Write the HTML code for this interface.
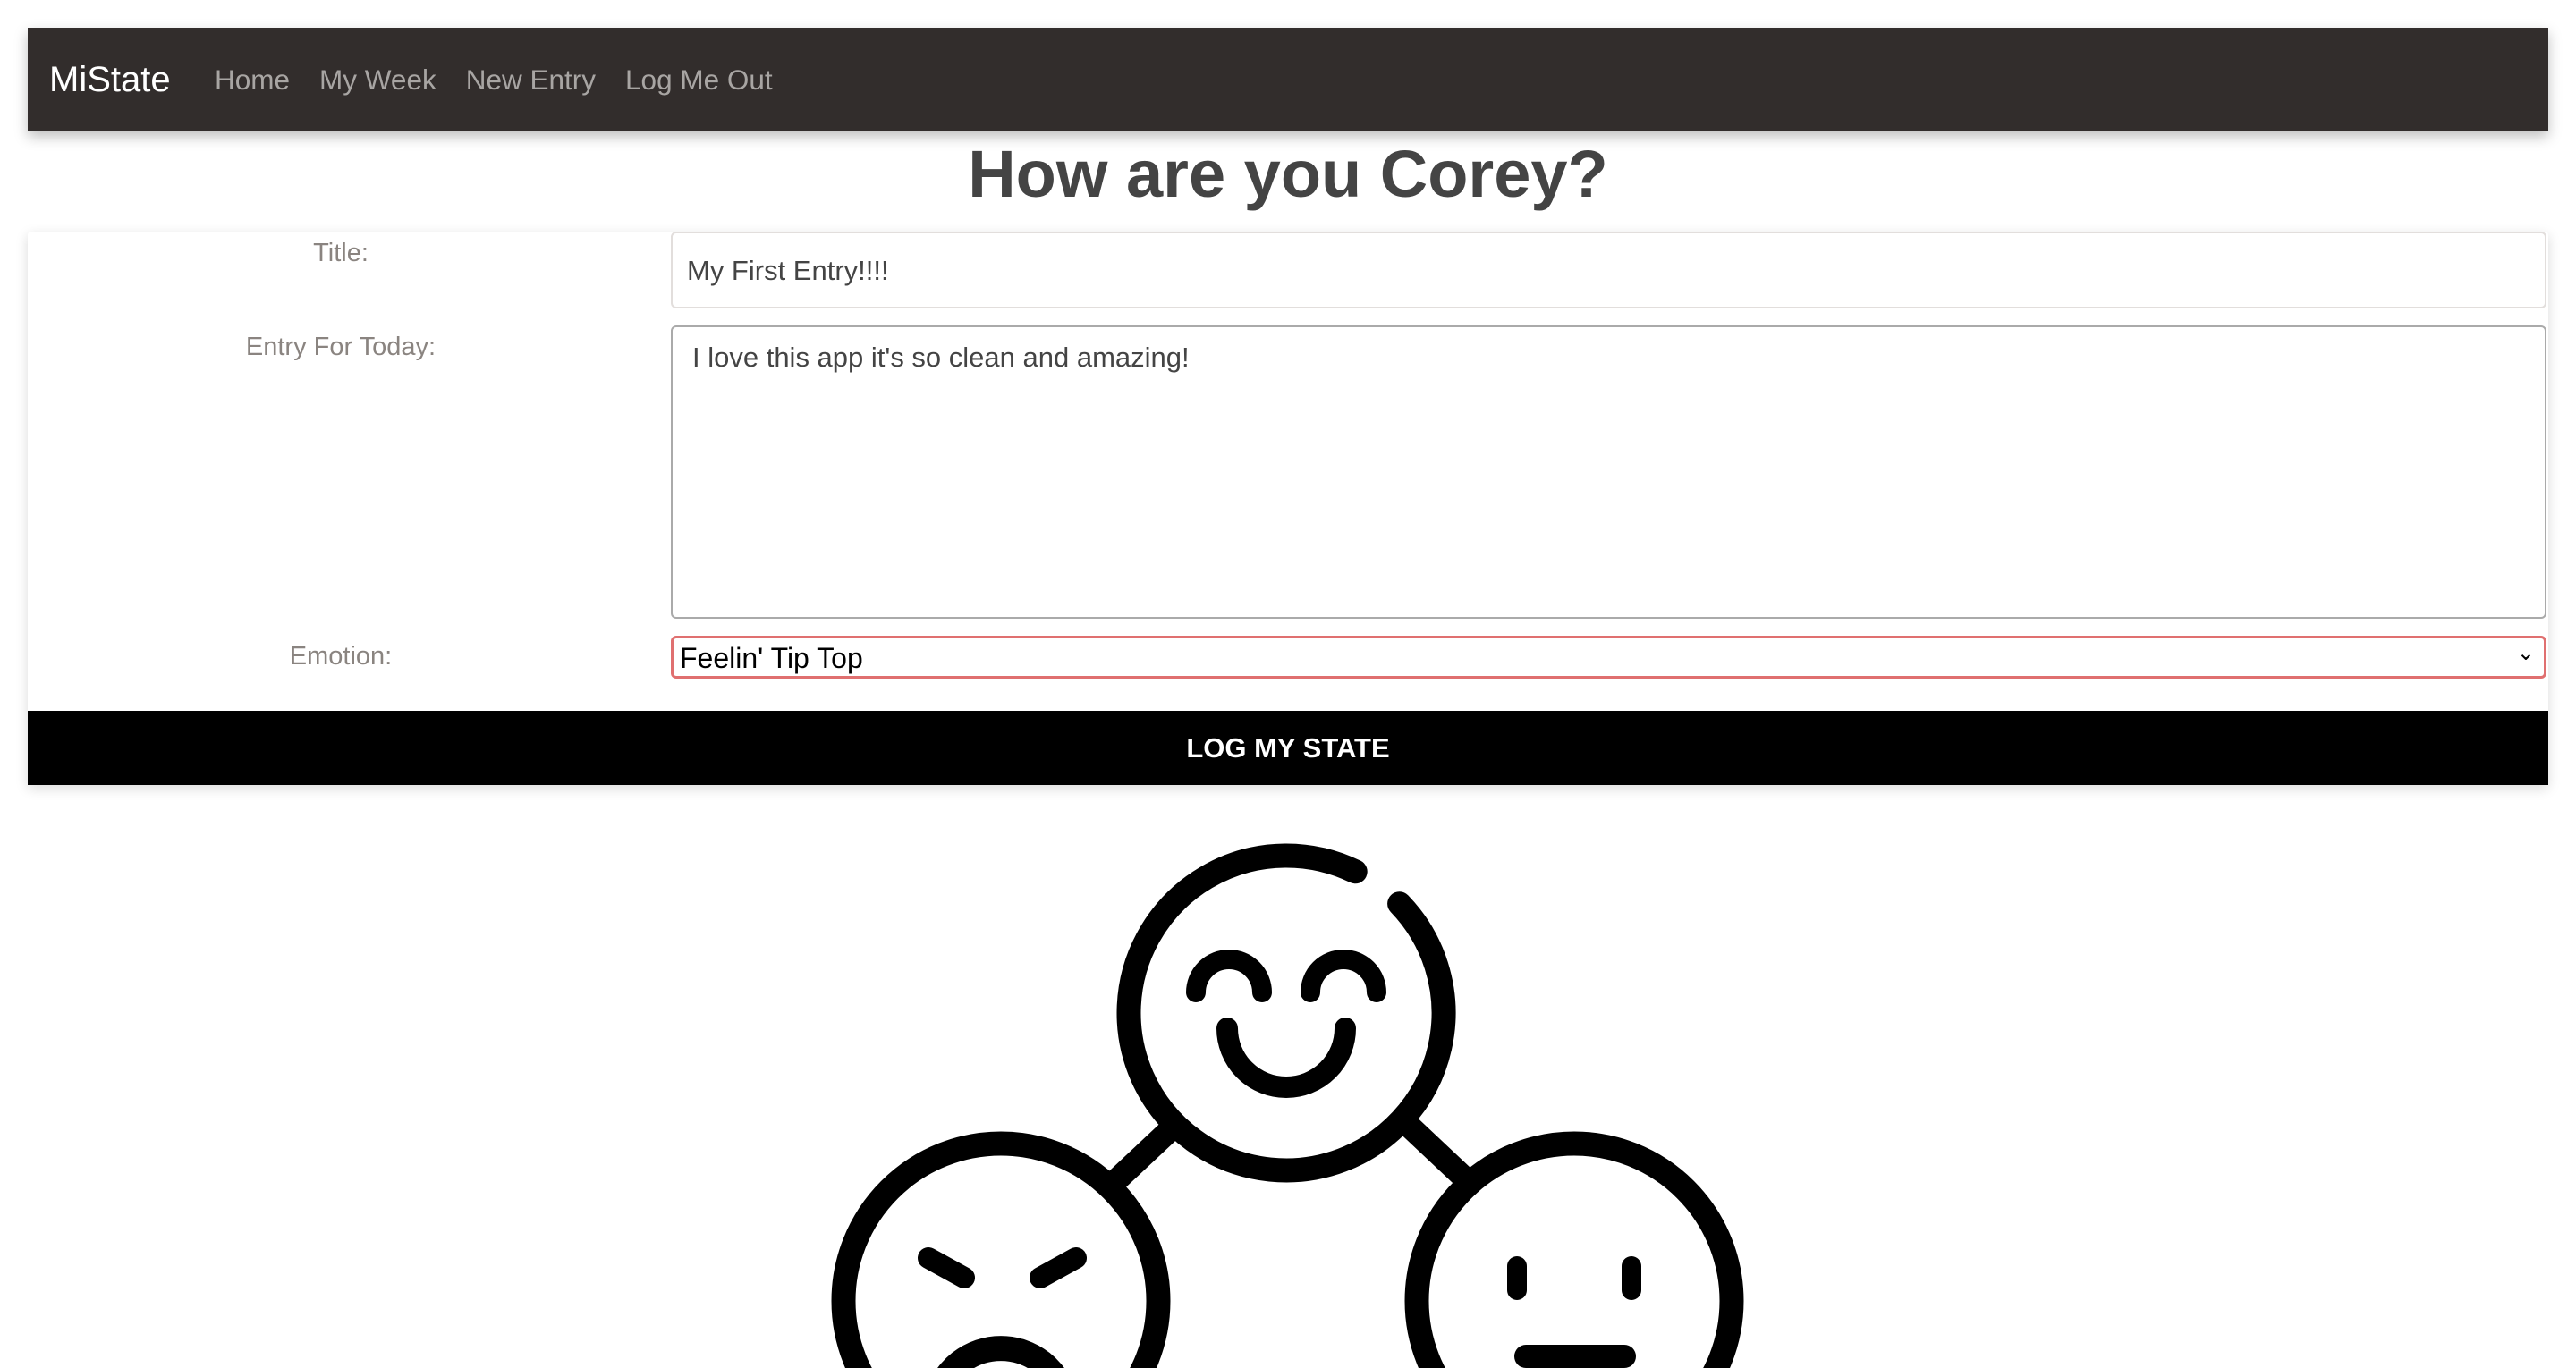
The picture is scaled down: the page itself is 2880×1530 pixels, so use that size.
<!DOCTYPE html>
<html><head><meta charset="utf-8"><style>
html,body{margin:0;padding:0;background:#fff;width:2880px;height:1530px;overflow:hidden;font-family:"Liberation Sans",sans-serif}
.nav{position:absolute;left:31px;top:31px;width:2818px;height:116px;background:#322d2c;box-shadow:0 6px 14px rgba(0,0,0,.25)}
.brand{position:absolute;left:24px;top:36px;font-size:40px;color:#fff}
.links{position:absolute;left:209px;top:40px;font-size:31.5px;color:#a8a5a3}
.links span{margin-right:33px}
h1{position:absolute;top:152px;left:0;width:2880px;text-align:center;margin:0;font-size:74px;font-weight:bold;color:#444}
.card{position:absolute;left:31px;top:259px;width:2818px;height:619px;background:#fff;box-shadow:0 4px 14px rgba(0,0,0,.15);border-radius:4px}
.lab{position:absolute;width:700px;left:31px;text-align:center;font-size:29px;color:#8a8480}
.inp{position:absolute;left:750px;width:2097px;box-sizing:border-box;border:2px solid #e2dedc;border-radius:6px;font-size:31px;color:#444}
.btn{position:absolute;left:31px;top:795px;width:2818px;height:83px;background:#000;color:#fff;font-weight:bold;font-size:31px;text-align:center;line-height:83px}
</style></head><body>
<div class="nav"><div class="brand">MiState</div><div class="links"><span>Home</span><span>My Week</span><span>New Entry</span><span>Log Me Out</span></div></div>
<h1>How are you Corey?</h1>
<div class="card"></div>
<div class="lab" style="top:267px">Title:</div>
<div class="inp" style="top:259px;height:86px;padding:24px 16px">My First Entry!!!!</div>
<div class="lab" style="top:372px">Entry For Today:</div>
<div class="inp" style="top:364px;height:328px;border-color:#aaa;padding:16px 22px">I love this app it's so clean and amazing!</div>
<div class="lab" style="top:718px">Emotion:</div>
<div class="inp" style="top:711px;height:48px;border:3px solid #e07070;color:#000;padding:4px 7px;font-size:32px">Feelin' Tip Top<span style="position:absolute;right:10px;top:2px;font-size:24px">&#8964;</span></div>
<div class="btn">LOG MY STATE</div>
<svg style="position:absolute;left:0;top:0" width="2880" height="1530" fill="none" stroke="#000" stroke-linecap="round">
<path d="M1564.6,1010.7 A176,176 0 1 1 1515.2,974.8" stroke-width="27"/>
<circle cx="1119" cy="1455" r="176" stroke-width="27"/>
<circle cx="1760" cy="1455" r="176" stroke-width="27"/>
<path d="M1246,1322 L1310,1262 M1574,1258 L1642,1322" stroke-width="26" stroke-linecap="butt"/>
<path d="M1337,1110 A37,37 0 0 1 1411,1110 M1465,1110 A37,37 0 0 1 1539,1110" stroke-width="22"/>
<path d="M1372,1150 A66,66 0 0 0 1504,1150" stroke-width="24"/>
<path d="M1038,1407 L1078,1429 M1163,1429 L1203,1407" stroke-width="24"/>
<path d="M1047,1565 A74,74 0 0 1 1191,1565" stroke-width="28"/>
<path d="M1696,1416 V1443 M1824,1416 V1443" stroke-width="22"/>
<path d="M1706,1517 H1816" stroke-width="26"/>
</svg>
</body></html>
